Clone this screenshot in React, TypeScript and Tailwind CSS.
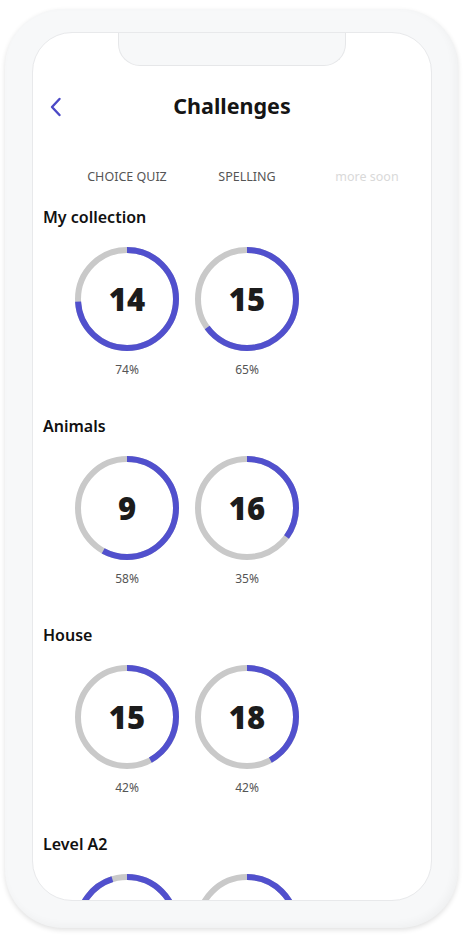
import React from "react";

type Ring = { value?: number; pct: number; label?: boolean };
type Section = { title: string; rings: Ring[] };

const sections: Section[] = [
  { title: "My collection", rings: [{ value: 14, pct: 74 }, { value: 15, pct: 65 }] },
  { title: "Animals", rings: [{ value: 9, pct: 58 }, { value: 16, pct: 35 }] },
  { title: "House", rings: [{ value: 15, pct: 42 }, { value: 18, pct: 42 }] },
  // last row is cut off by the screen edge, only the ring tops show
  { title: "Level A2", rings: [{ pct: 95 }, { pct: 40 }] },
];

const font = { fontFamily: "'Noto Sans', 'Open Sans', sans-serif" };

function ProgressRing({ value, pct }: Ring) {
  const r = 49;
  const c = 2 * Math.PI * r;
  return (
    <div className="flex w-[120px] flex-col items-center">
      <div className="relative h-[104px] w-[104px]">
        <svg width="104" height="104" viewBox="0 0 104 104" className="-rotate-90">
          <circle cx="52" cy="52" r={r} fill="none" stroke="#c9c9c9" strokeWidth="6" />
          <circle
            cx="52"
            cy="52"
            r={r}
            fill="none"
            stroke="#5150cd"
            strokeWidth="6"
            strokeDasharray={`${(c * pct) / 100} ${c}`}
          />
        </svg>
        {value !== undefined && (
          <div className="absolute inset-0 flex items-center justify-center text-[31px] font-black leading-none text-[#1c1c1c]">
            {value}
          </div>
        )}
      </div>
      {value !== undefined && (
        <div className="mt-[11px] h-4 text-[12px] leading-4 text-[#555]">{pct}%</div>
      )}
    </div>
  );
}

export default function App() {
  return (
    <div className="h-[937px] w-[463px] overflow-hidden bg-white pl-[5px] pt-[9px]" style={font}>
      {/* phone frame */}
      <div className="h-[919px] w-[453px] rounded-[58px] bg-[#f7f8f9] pb-[27px] pl-[27px] pr-[26px] pt-[23px] shadow-[0_2px_5px_rgba(0,0,0,0.12),inset_-3px_-3px_8px_rgba(0,0,0,0.035)]">
        <div className="relative h-[869px] w-[400px] overflow-hidden rounded-[40px] border border-[#e8e9eb] bg-white">
          {/* notch */}
          <div className="absolute left-[85px] top-[-1px] h-[34px] w-[228px] rounded-b-[22px] border-x border-b border-[#e6e7e9] bg-[#f7f8f9]" />

          <div className="pt-[59px]">
            {/* header */}
            <div className="relative flex h-[28px] items-center justify-center">
              <svg
                className="absolute left-[16px] top-[5px]"
                width="14"
                height="20"
                viewBox="0 0 14 20"
                fill="none"
                stroke="#4b49c6"
                strokeWidth="2.4"
                strokeLinecap="round"
                strokeLinejoin="round"
              >
                <path d="M10.5 2 L3 10 L10.5 18" />
              </svg>
              <h1 className="text-[21.5px] font-bold leading-none text-[#151515]">Challenges</h1>
            </div>

            {/* tabs */}
            <div className="ml-[34px] mt-[47px] flex h-5 items-center text-[12.5px]">
              <div className="w-[120px] text-center text-[#555]">CHOICE QUIZ</div>
              <div className="w-[120px] text-center text-[#555]">SPELLING</div>
              <div className="w-[120px] text-center text-[#d9d9d9]">more soon</div>
            </div>

            {/* sections */}
            <div className="mt-[20px] flex flex-col gap-[38px] px-[10px]">
              {sections.map((s) => (
                <div key={s.title}>
                  <h2 className="h-5 text-[16px] font-semibold leading-5 text-[#111]">{s.title}</h2>
                  <div className="ml-[24px] mt-[20px] flex">
                    {s.rings.map((r, i) => (
                      <ProgressRing key={i} {...r} />
                    ))}
                  </div>
                </div>
              ))}
            </div>
          </div>
        </div>
      </div>
    </div>
  );
}
